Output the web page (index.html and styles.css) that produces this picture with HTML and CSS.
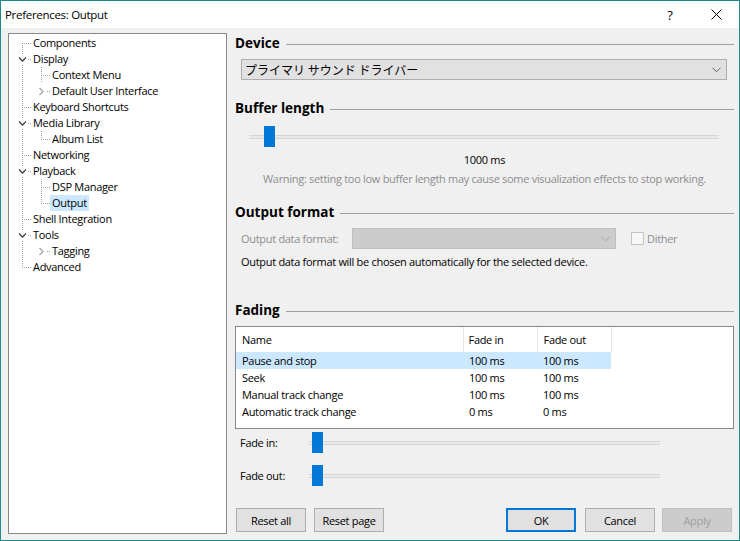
FILE: index.html
```html
<!DOCTYPE html>
<html lang="en">

<head>
    <meta charset="UTF-8">
    <title>Preferences: Output</title>
    <link rel="stylesheet" href="styles.css">
</head>

<body>
    <div class="window">
        <div class="titlebar">
            <span class="title">Preferences: Output</span>
            <span class="cap-btn help">?</span>
            <span class="cap-btn close">
                <svg width="11" height="11" viewBox="0 0 11 11"><path d="M0.5 0.5L10.5 10.5M10.5 0.5L0.5 10.5" stroke="#000" stroke-width="1" fill="none"/></svg>
            </span>
        </div>
        <div class="main">
            <div class="tree">
                <div class="node"><span class="g first"></span><span class="label">Components</span></div>
                <div class="node"><span class="g tee open"><svg width="9" height="9" viewBox="0 0 9 9"><path d="M1 2.5L4.5 6L8 2.5" stroke="#444" stroke-width="1.3" fill="none"/></svg></span><span class="label">Display</span></div>
                <div class="node"><span class="g pipe"></span><span class="g tee"></span><span class="label">Context Menu</span></div>
                <div class="node"><span class="g pipe"></span><span class="g shut"><svg width="9" height="9" viewBox="0 0 9 9"><path d="M2.5 1L6 4.5L2.5 8" stroke="#a6a6a6" stroke-width="1.3" fill="none"/></svg></span><span class="label">Default User Interface</span></div>
                <div class="node"><span class="g tee"></span><span class="label">Keyboard Shortcuts</span></div>
                <div class="node"><span class="g tee open"><svg width="9" height="9" viewBox="0 0 9 9"><path d="M1 2.5L4.5 6L8 2.5" stroke="#444" stroke-width="1.3" fill="none"/></svg></span><span class="label">Media Library</span></div>
                <div class="node"><span class="g pipe"></span><span class="g end"></span><span class="label">Album List</span></div>
                <div class="node"><span class="g tee"></span><span class="label">Networking</span></div>
                <div class="node"><span class="g tee open"><svg width="9" height="9" viewBox="0 0 9 9"><path d="M1 2.5L4.5 6L8 2.5" stroke="#444" stroke-width="1.3" fill="none"/></svg></span><span class="label">Playback</span></div>
                <div class="node"><span class="g pipe"></span><span class="g tee"></span><span class="label">DSP Manager</span></div>
                <div class="node"><span class="g pipe"></span><span class="g end"></span><span class="label selected">Output</span></div>
                <div class="node"><span class="g tee"></span><span class="label">Shell Integration</span></div>
                <div class="node"><span class="g tee open"><svg width="9" height="9" viewBox="0 0 9 9"><path d="M1 2.5L4.5 6L8 2.5" stroke="#444" stroke-width="1.3" fill="none"/></svg></span><span class="label">Tools</span></div>
                <div class="node"><span class="g pipe"></span><span class="g shut"><svg width="9" height="9" viewBox="0 0 9 9"><path d="M2.5 1L6 4.5L2.5 8" stroke="#a6a6a6" stroke-width="1.3" fill="none"/></svg></span><span class="label">Tagging</span></div>
                <div class="node"><span class="g end"></span><span class="label">Advanced</span></div>
            </div>

            <div class="page">
                <div class="group-title">Device</div>
                <div class="combo device">
                    <span>プライマリ サウンド ドライバー</span>
                    <svg width="9" height="6" viewBox="0 0 9 6"><path d="M0.5 0.8L4.5 4.8L8.5 0.8" stroke="#606060" stroke-width="1" fill="none"/></svg>
                </div>

                <div class="group-title buffer-title">Buffer length</div>
                <div class="slider buffer-slider"><span class="thumb"></span></div>
                <div class="buffer-value">1000 ms</div>
                <div class="warning">Warning: setting too low buffer length may cause some visualization effects to stop working.</div>

                <div class="group-title format-title">Output format</div>
                <div class="format-row">
                    <span class="format-label">Output data format:</span>
                    <div class="combo disabled">
                        <span></span>
                        <svg width="9" height="6" viewBox="0 0 9 6"><path d="M0.5 0.8L4.5 4.8L8.5 0.8" stroke="#a8a8a8" stroke-width="1" fill="none"/></svg>
                    </div>
                    <span class="checkbox"></span>
                    <span class="check-label">Dither</span>
                </div>
                <div class="format-info">Output data format will be chosen automatically for the selected device.</div>

                <div class="group-title fading-title">Fading</div>
                <div class="listview">
                    <table>
                        <colgroup><col class="c-name"><col class="c-in"><col class="c-out"></colgroup>
                        <thead>
                            <tr><th>Name</th><th>Fade in</th><th>Fade out</th></tr>
                        </thead>
                        <tbody>
                            <tr class="selected"><td>Pause and stop</td><td>100 ms</td><td>100 ms</td></tr>
                            <tr><td>Seek</td><td>100 ms</td><td>100 ms</td></tr>
                            <tr><td>Manual track change</td><td>100 ms</td><td>100 ms</td></tr>
                            <tr><td>Automatic track change</td><td>0 ms</td><td>0 ms</td></tr>
                        </tbody>
                    </table>
                </div>

                <div class="fade-row fade-in">
                    <span class="fade-label">Fade in:</span>
                    <div class="slider"><span class="thumb"></span></div>
                </div>
                <div class="fade-row fade-out">
                    <span class="fade-label">Fade out:</span>
                    <div class="slider"><span class="thumb"></span></div>
                </div>

                <div class="buttons">
                    <button class="btn">Reset all</button>
                    <button class="btn reset-page">Reset page</button>
                    <button class="btn ok">OK</button>
                    <button class="btn cancel">Cancel</button>
                    <button class="btn apply" disabled>Apply</button>
                </div>
            </div>
        </div>
    </div>
</body>

</html>
```

FILE: styles.css
```css
html,
body {
    margin: 0;
    background: #f0f0f0;
}

.window {
    width: 740px;
    height: 541px;
    box-sizing: border-box;
    border: 1px solid #1d8a8c;
    background: #f0f0f0;
    display: flex;
    flex-direction: column;
    font-family: "Open Sans", "Noto Sans CJK JP", sans-serif;
    font-size: 11px;
    letter-spacing: -0.3px;
    color: #000;
}

/* title bar */
.titlebar {
    height: 27px;
    background: #fff;
    display: flex;
    align-items: center;
    padding-left: 4px;
}

.title {
    font-size: 11.5px;
}

.cap-btn {
    width: 46px;
    height: 27px;
    display: flex;
    align-items: center;
    justify-content: center;
}

.help {
    margin-left: auto;
    font-size: 13px;
}

/* content */
.main {
    flex: 1;
    display: flex;
    padding: 5px 5px 6px 7px;
    gap: 8px;
}

.tree {
    width: 219px;
    box-sizing: border-box;
    background: #fff;
    border: 1px solid #828790;
    padding: 1px 0 0 3px;
}

.node {
    display: flex;
    height: 16px;
    line-height: 16px;
}

.g {
    width: 19px;
    height: 16px;
    position: relative;
    flex: none;
}

.g::before,
.g::after {
    content: "";
    position: absolute;
}

.g.first::before,
.g.tee::before,
.g.end::before,
.g.pipe::before {
    left: 10px;
    width: 1px;
    background: repeating-linear-gradient(to bottom, #a0a0a0 0 1px, transparent 1px 2px);
}

.g.first::before { top: 8px; bottom: 0; }
.g.tee::before,
.g.pipe::before { top: 0; bottom: 0; }
.g.end::before { top: 0; height: 9px; }

.g.first::after,
.g.tee::after,
.g.end::after,
.g.shut::after {
    top: 8px;
    left: 12px;
    width: 7px;
    height: 1px;
    background: repeating-linear-gradient(to right, #a0a0a0 0 1px, transparent 1px 2px);
}

.g.shut::after {
    left: 16px;
    width: 3px;
}

.g.open::after {
    left: 16px;
    width: 3px;
}

.g svg {
    position: absolute;
    left: 6px;
    top: 4px;
    background: #fff;
}

.label {
    padding: 0 2px;
    white-space: nowrap;
}

.label.selected {
    background: #cce8ff;
}

/* right page */
.page {
    flex: 1;
    display: flex;
    flex-direction: column;
}

.group-title {
    height: 20px;
    line-height: 20px;
    font-size: 13.5px;
    font-weight: bold;
    letter-spacing: 0;
    display: flex;
    align-items: center;
}

.group-title::after {
    content: "";
    flex: 1;
    height: 1px;
    background: #a0a0a0;
    margin: 2px 0 0 6px;
}

.combo {
    height: 21px;
    box-sizing: border-box;
    border: 1px solid #adadad;
    background: #e1e1e1;
    display: flex;
    align-items: center;
    justify-content: space-between;
    padding: 0 5px 0 3px;
}

.combo.device {
    margin: 6px 7px 0 6px;
    font-family: "Noto Sans CJK JP", sans-serif;
    font-size: 12px;
    letter-spacing: 0;
}

.combo.disabled {
    width: 264px;
    background: #cccccc;
    border-color: #bfbfbf;
}

.buffer-title {
    margin-top: 18px;
}

.slider {
    height: 21px;
    display: flex;
    align-items: center;
    background: linear-gradient(to bottom, transparent 9px, #d6d6d6 9px 10px, #e7eaea 10px 12px, #d6d6d6 12px 13px, transparent 13px);
}

.thumb {
    width: 11px;
    height: 21px;
    background: #0078d7;
}

.buffer-slider {
    margin: 8px 15px 0 14px;
}

.buffer-slider .thumb {
    margin-left: 15px;
}

.buffer-value {
    margin-top: 4px;
    line-height: 17px;
    text-align: center;
}

.warning {
    margin-top: 2px;
    line-height: 17px;
    text-align: center;
    color: #8d8d8d;
}

.format-title {
    margin-top: 15px;
}

.format-row {
    margin-top: 6px;
    height: 21px;
    display: flex;
    align-items: center;
    padding-left: 6px;
}

.format-label {
    width: 111px;
    color: #8d8d8d;
}

.checkbox {
    width: 13px;
    height: 13px;
    box-sizing: border-box;
    border: 1px solid #c4c4c4;
    background: #f7f7f7;
    margin-left: 15px;
}

.check-label {
    margin-left: 3px;
    color: #8d8d8d;
}

.format-info {
    margin-top: 4px;
    line-height: 17px;
    padding-left: 6px;
}

.fading-title {
    margin-top: 30px;
}

.listview {
    margin-top: 6px;
    height: 103px;
    box-sizing: border-box;
    border: 1px solid #828790;
    background: #fff;
}

.listview table {
    border-collapse: collapse;
    table-layout: fixed;
    width: 375px;
    font-size: 11px;
}

.c-name { width: 227px; }
.c-in { width: 74px; }
.c-out { width: 74px; }

.listview th {
    height: 25px;
    padding: 0 0 0 6px;
    text-align: left;
    font-weight: normal;
    border-right: 1px solid #e5e5e5;
}

.listview th:nth-child(2) {
    padding-left: 5px;
}

.listview td {
    height: 17px;
    padding: 0 0 0 6px;
    line-height: 17px;
    white-space: nowrap;
}

.listview tr.selected td {
    background: #cce8ff;
}

.fade-row {
    height: 21px;
    display: flex;
    align-items: center;
    padding-left: 5px;
}

.fade-in {
    margin-top: 3px;
}

.fade-out {
    margin-top: 12px;
}

.fade-label {
    width: 69px;
}

.fade-row .slider {
    width: 351px;
}

.fade-row .thumb {
    margin-left: 3px;
}

.buttons {
    margin-top: 22px;
    display: flex;
    padding-left: 1px;
}

.btn {
    width: 70px;
    height: 24px;
    box-sizing: border-box;
    border: 1px solid #adadad;
    background: #e1e1e1;
    font-family: "Open Sans", sans-serif;
    font-size: 11px;
    letter-spacing: -0.3px;
    color: #000;
    padding: 0;
}

.reset-page {
    margin-left: 8px;
}

.ok {
    margin-left: auto;
    border: 2px solid #0078d7;
}

.cancel {
    margin-left: 9px;
}

.apply {
    margin-left: 7px;
    margin-right: 2px;
    background: #cccccc;
    border-color: #bfbfbf;
    color: #a0a0a0;
}
```
